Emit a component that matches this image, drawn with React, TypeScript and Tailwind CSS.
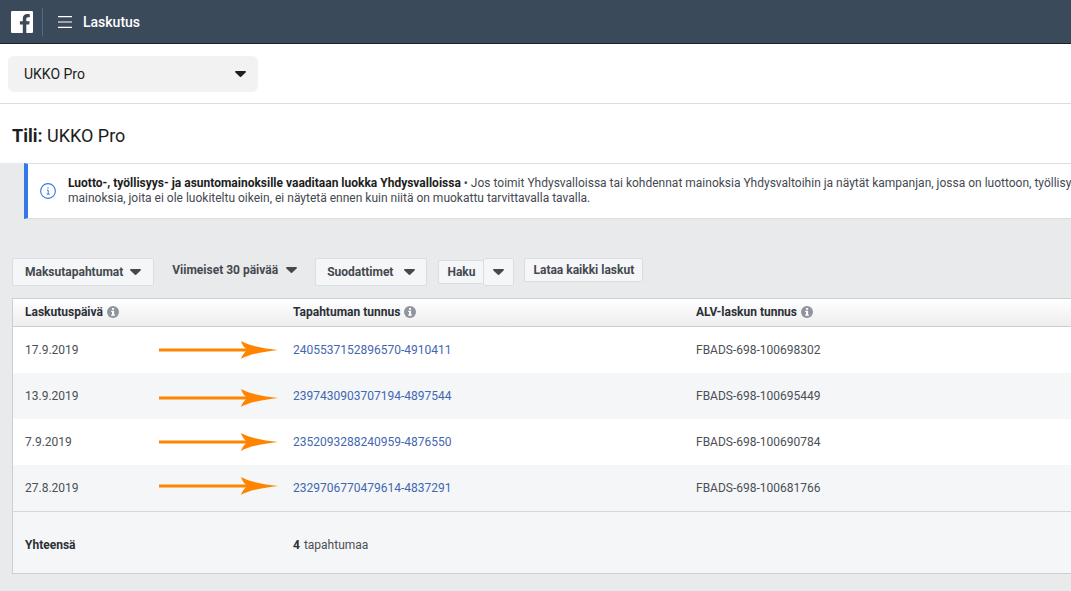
import clsx from 'clsx';

const transactions = [
  { date: '17.9.2019', id: '2405537152896570-4910411', vat: 'FBADS-698-100698302' },
  { date: '13.9.2019', id: '2397430903707194-4897544', vat: 'FBADS-698-100695449' },
  { date: '7.9.2019', id: '2352093288240959-4876550', vat: 'FBADS-698-100690784' },
  { date: '27.8.2019', id: '2329706770479614-4837291', vat: 'FBADS-698-100681766' },
];

const columns = ['Laskutuspäivä', 'Tapahtuman tunnus', 'ALV-laskun tunnus'];

const button = 'flex shrink-0 items-center rounded-xs border border-[#dadde1] bg-[#f5f6f7]';

function Caret({ className }: { className?: string }) {
  return (
    <svg viewBox="0 0 11 6" className={clsx('h-1.5 w-[11px] shrink-0', className)} fill="currentColor">
      <path d="M0.8 0h9.4c.8 0 1 .9.4 1.4L6.4 5.6a1.3 1.3 0 0 1-1.8 0L.4 1.4C-.2.9 0 0 .8 0z" />
    </svg>
  );
}

function FacebookLogo() {
  return (
    <svg viewBox="0 0 22 22" className="size-[22px]">
      <rect width="22" height="22" rx="1.2" fill="#fff" />
      <path
        d="M11.800 22v-8.500H8.900V10.200h2.900V7.600c0-2.900 1.800-4.500 4.400-4.500 1.200 0 2.300.1 2.600.2v3h-1.800c-1.400 0-1.700.7-1.700 1.700v2.200h3.400l-.5 3.300h-2.900V22z"
        fill="#3b4a5a"
      />
    </svg>
  );
}

function MenuIcon() {
  return (
    <svg viewBox="0 0 14 12" className="h-3 w-3.5" stroke="#fff" strokeWidth="1.2">
      <path d="M0 .6h14M0 6h14M0 11.400h14" />
    </svg>
  );
}

function InfoBadge() {
  return (
    <svg viewBox="0 0 12 12" className="size-3">
      <circle cx="6" cy="6" r="6" fill="#90949c" />
      <path d="M5 2h2.1v1.8H5zM4.2 4.8h2.9v3.7h.8v1.3H4.2V8.5H5V6h-.8z" fill="#fff" />
    </svg>
  );
}

function InfoOutline() {
  return (
    <svg viewBox="0 0 16 16" className="size-4 shrink-0" fill="none" stroke="#3578e5">
      <circle cx="8" cy="8" r="7.4" strokeWidth="1.1" />
      <path d="M8 4.3v1.3M7 7.1h1.2v4M6.7 11.2h3" strokeWidth="1" />
    </svg>
  );
}

function Arrow({ className }: { className: string }) {
  return (
    <svg viewBox="0 0 120 18" className={clsx('pointer-events-none absolute left-[146px] h-[18px] w-[120px]', className)}>
      <path d="M0 7.500h90v3H0z" fill="#ff8400" />
      <path d="M82 0C90 5 106 7.500 119 9c-13 1.500-29 4-37 9 1-3.500 3-6.500 6.500-9C85 6.500 83 3.500 82 0z" fill="#ff8400" />
    </svg>
  );
}

function TopBar() {
  return (
    <header className="flex h-11 items-center border-b border-[#1d2129] bg-[#3b4a5a] pl-[11px]">
      <a href="#" aria-label="Facebook">
        <FacebookLogo />
      </a>
      <div className="ml-[9px] h-7 w-px bg-[#526a85]" />
      <button type="button" className="ml-[15px] flex items-center gap-[11px] text-sm font-medium text-white">
        <MenuIcon />
        Laskutus
      </button>
    </header>
  );
}

function AccountBar() {
  return (
    <div className="flex h-[60px] items-center border-b border-[#dadde1] bg-white px-2">
      <button
        type="button"
        className="flex h-9 w-[250px] items-center justify-between rounded-md bg-[#f2f2f2] pr-3 pl-4 text-sm text-[#1c1e21]"
      >
        UKKO Pro
        <Caret />
      </button>
    </div>
  );
}

function Notice() {
  return (
    <div className="ml-6 flex h-14 items-center gap-3 overflow-hidden border-y border-l-4 border-y-[#dadde1] border-l-[#3578e5] bg-white pl-3">
      <InfoOutline />
      <p className="text-xs leading-[15px] whitespace-nowrap text-[#444950]">
        <strong className="font-bold text-[#1c1e21]">
          Luotto-, työllisyys- ja asuntomainoksille vaaditaan luokka Yhdysvalloissa
        </strong>{' '}
        • Jos toimit Yhdysvalloissa tai kohdennat mainoksia Yhdysvaltoihin ja näytät kampanjan, jossa on luottoon,
        työllisyyteen
        <br />
        mainoksia, joita ei ole luokiteltu oikein, ei näytetä ennen kuin niitä on muokattu tarvittavalla tavalla.
      </p>
    </div>
  );
}

function Toolbar() {
  return (
    <div className="flex items-start pl-3 text-xs font-bold text-[#444950]">
      <button type="button" className={clsx(button, 'h-7 gap-[7px] px-3')}>
        Maksutapahtumat
        <Caret />
      </button>
      <button type="button" className="ml-[18px] flex h-6 shrink-0 items-center gap-2">
        Viimeiset 30 päivää
        <Caret />
      </button>
      <button type="button" className={clsx(button, 'ml-[18px] h-7 gap-[11px] px-[11px]')}>
        Suodattimet
        <Caret />
      </button>
      <div className="ml-[11px] flex items-center">
        <button type="button" className={clsx(button, 'h-6 border-r-0 px-2')}>
          Haku
        </button>
        <button type="button" aria-label="Haku" className={clsx(button, 'h-7 px-[9px]')}>
          <Caret />
        </button>
      </div>
      <button type="button" className={clsx(button, 'ml-2.5 h-6 px-2')}>
        Lataa kaikki laskut
      </button>
    </div>
  );
}

function TransactionTable() {
  return (
    <div className="relative mt-3 ml-3 border-y border-l border-[#ccced2]">
      <table className="w-full table-fixed border-separate border-spacing-0 text-left text-xs text-[#4b4f56]">
        <colgroup>
          <col className="w-[268px]" />
          <col className="w-[403px]" />
          <col />
        </colgroup>
        <thead className="bg-linear-to-b from-white to-[#ededee]">
          <tr className="h-7">
            {columns.map((column) => (
              <th key={column} className="border-b border-[#ccced2] px-3 pt-0 pb-0.5 font-bold text-[#2b2f36]">
                <span className="flex items-center gap-1">
                  {column}
                  <InfoBadge />
                </span>
              </th>
            ))}
          </tr>
        </thead>
        <tbody>
          {transactions.map((row) => (
            <tr key={row.id} className="h-[46px] bg-white even:bg-[#f5f6f7]">
              <td className="px-3">{row.date}</td>
              <td className="px-3">
                <a href="#" className="text-[#4267b2]">
                  {row.id}
                </a>
              </td>
              <td className="px-3">{row.vat}</td>
            </tr>
          ))}
        </tbody>
        <tfoot>
          <tr className="h-[62px] bg-[#f5f6f7]">
            <th className="border-t border-[#d5d7da] px-3 pt-1 font-bold text-[#2b2f36]">Yhteensä</th>
            <td className="border-t border-[#d5d7da] px-3 pt-1">
              <span className="flex gap-1">
                <strong className="font-bold text-[#2b2f36]">4</strong>
                tapahtumaa
              </span>
            </td>
            <td className="border-t border-[#d5d7da]" />
          </tr>
        </tfoot>
      </table>

      {/* Pointers to the transaction ids */}
      <Arrow className="top-[42px]" />
      <Arrow className="top-[90px]" />
      <Arrow className="top-[134px]" />
      <Arrow className="top-[178px]" />
    </div>
  );
}

export default function App() {
  return (
    <div className="min-h-screen overflow-x-hidden bg-[#e9eaec] font-['Roboto',sans-serif]">
      <TopBar />
      <AccountBar />
      <h1 className="flex h-[59px] items-center bg-white px-3 pt-1 text-lg text-[#1c1e21]">
        <span>
          <strong className="font-bold">Tili:</strong> UKKO Pro
        </span>
      </h1>
      <Notice />
      <main className="pt-[39px] pb-4">
        <Toolbar />
        <TransactionTable />
      </main>
    </div>
  );
}
